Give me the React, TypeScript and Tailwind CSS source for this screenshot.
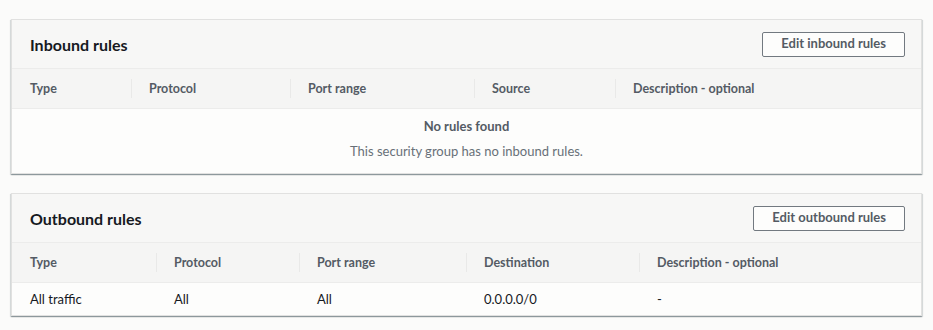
const INBOUND_COLS = ["Type", "Protocol", "Port range", "Source", "Description - optional"];
const OUTBOUND_COLS = ["Type", "Protocol", "Port range", "Destination", "Description - optional"];
const OUTBOUND_ROWS = [["All traffic", "All", "All", "0.0.0.0/0", "-"]];

function HeaderCells({ cols }: { cols: string[] }) {
  return (
    <>
      {cols.map((col, i) => (
        <div key={col} className="relative flex items-center pl-[18px] pt-px text-[12.5px] font-bold text-[#545b64]">
          {i > 0 && <span className="absolute left-0 top-[10px] bottom-[10px] w-px bg-[#e9e9e8]" />}
          {col}
        </div>
      ))}
    </>
  );
}

function Panel({
  title,
  button,
  grid,
  cols,
  children,
}: {
  title: string;
  button: string;
  grid: string;
  cols: string[];
  children: React.ReactNode;
}) {
  return (
    <section className="border border-[#e1e1e0] bg-[#fdfdfc] shadow-[0_1px_1px_0_rgba(0,28,36,0.3),1px_1px_1px_0_rgba(0,28,36,0.1),-1px_1px_1px_0_rgba(0,28,36,0.1)]">
      <div className="flex h-[49px] items-center justify-between border-b border-[#ececeb] bg-[#f7f7f6] pl-[18px] pr-[16px]">
        <h2 className="pt-px text-[16px] font-bold text-[#16191f]">{title}</h2>
        <button className="h-[25px] rounded-[2px] border border-[#727980] bg-[#fdfdfc] px-[18px] text-[13px] font-bold text-[#545b64]">
          {button}
        </button>
      </div>
      <div className={`grid h-[40px] border-b border-[#ececeb] bg-[#f5f5f4] ${grid}`}>
        <HeaderCells cols={cols} />
      </div>
      {children}
    </section>
  );
}

export default function App() {
  return (
    <div className="flex min-h-[330px] flex-col gap-[19px] bg-[#fbfbfa] px-[11px] pt-[19px] font-['Lato',sans-serif]">
      <Panel
        title="Inbound rules"
        button="Edit inbound rules"
        grid="grid-cols-[119px_159px_184px_141px_1fr]"
        cols={INBOUND_COLS}
      >
        <div className="flex h-[64px] flex-col items-center gap-[9px] pt-[9px] leading-[16px]">
          <p className="text-[13px] font-bold text-[#545b64]">No rules found</p>
          <p className="text-[13px] text-[#687078]">This security group has no inbound rules.</p>
        </div>
      </Panel>
      <Panel
        title="Outbound rules"
        button="Edit outbound rules"
        grid="grid-cols-[144px_143px_167px_173px_1fr]"
        cols={OUTBOUND_COLS}
      >
        {OUTBOUND_ROWS.map((row) => (
          <div key={row[0]} className="grid h-[32px] grid-cols-[144px_143px_167px_173px_1fr]">
            {row.map((cell, i) => (
              <div key={i} className="flex items-center pl-[18px] pt-[2px] text-[13px] text-[#16191f]">
                {cell}
              </div>
            ))}
          </div>
        ))}
      </Panel>
    </div>
  );
}
